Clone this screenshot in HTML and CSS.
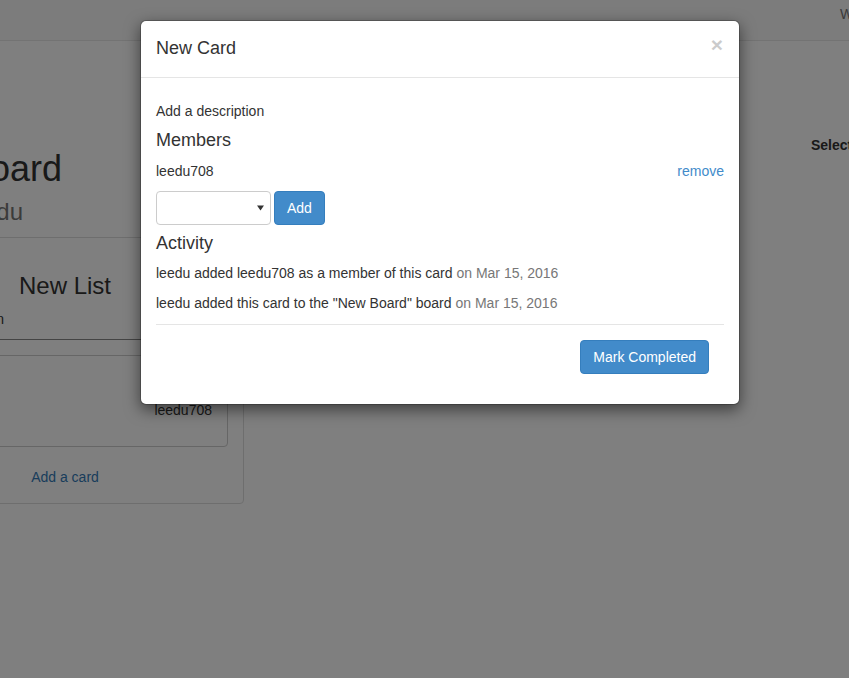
FILE: index.html
```html
<!DOCTYPE html>
<html>
<head>
<meta charset="utf-8">
<title>New Card</title>
<link rel="stylesheet" href="styles.css">
</head>
<body>
<div class="viewport">
  <nav class="navbar">
    <span class="nav-text">Welcome, leedu</span>
  </nav>
  <div class="main">
    <section class="board-col">
      <div class="board-head">
        <h1 class="board-title">New Board</h1>
      </div>
      <div class="board-sub-wrap">
        <div class="board-sub">by leedu</div>
      </div>
      <div class="list-panel">
        <h3 class="list-title">New List</h3>
        <div class="list-input">Card description</div>
        <div class="card">
          <div class="card-title">New Card</div>
          <div class="card-member">leedu708</div>
        </div>
        <a class="add-card">Add a card</a>
      </div>
    </section>
    <aside class="side-col">
      <label class="side-label">Select a board</label>
    </aside>
  </div>

  <div class="backdrop"></div>

  <div class="modal">
    <div class="modal-header">
      <h4 class="modal-title">New Card</h4>
      <span class="close">&times;</span>
    </div>
    <div class="modal-body">
      <p class="desc">Add a description</p>
      <h4 class="section-title">Members</h4>
      <div class="member-row">
        <span>leedu708</span>
        <a class="link">remove</a>
      </div>
      <div class="add-row">
        <div class="select">
          <svg class="caret" width="7" height="6" viewBox="0 0 7 6"><path d="M0 0.5 H7 L3.5 5.5 Z" fill="#333"/></svg>
        </div>
        <button class="btn">Add</button>
      </div>
      <h4 class="section-title activity-title">Activity</h4>
      <p class="activity">leedu added leedu708 as a member of this card <span class="muted">on Mar 15, 2016</span></p>
      <p class="activity last">leedu added this card to the "New Board" board <span class="muted">on Mar 15, 2016</span></p>
      <div class="modal-footer">
        <button class="btn">Mark Completed</button>
      </div>
    </div>
  </div>
</div>
</body>
</html>
```

FILE: styles.css
```css
html, body {
  margin: 0;
  padding: 0;
  overflow: hidden;
}
body {
  font-family: "Liberation Sans", Arial, sans-serif;
  font-size: 14px;
  line-height: 20px;
  color: #333;
  background: #fff;
}
.viewport {
  position: relative;
  width: 849px;
  height: 678px;
  overflow: hidden;
}
.navbar {
  height: 40px;
  background: #f8f8f8;
  border-bottom: 1px solid #e7e7e7;
  display: flex;
  padding-left: 840px;
  box-sizing: content-box;
  white-space: nowrap;
}
.nav-text {
  color: #777;
  line-height: 20px;
  padding-top: 4px;
}
.main {
  display: flex;
  align-items: flex-start;
  gap: 567px;
  margin-left: -114px;
}
.board-col {
  width: 358px;
  flex: none;
}
.board-head {
  display: flex;
  justify-content: flex-end;
  padding-right: 182px;
  margin-top: 108px;
}
.board-title {
  margin: 0;
  font-size: 36px;
  line-height: 39.6px;
  font-weight: 500;
  white-space: nowrap;
  flex: none;
}
.board-sub-wrap {
  display: flex;
  justify-content: flex-end;
  padding-right: 221px;
  margin-top: 10px;
}
.board-sub {
  flex: none;
  font-size: 24px;
  line-height: 26.4px;
  color: #777;
  white-space: nowrap;
}
.list-panel {
  margin-top: 12px;
  border: 1px solid #ddd;
  border-radius: 4px;
  padding: 15px 15px 16px;
}
.list-title {
  margin: 20px 0 0;
  font-size: 24px;
  line-height: 26.4px;
  font-weight: 500;
  text-align: center;
}
.list-input {
  padding: 10px 0;
  border-bottom: 1px solid #888;
  white-space: nowrap;
}
.card {
  margin-top: 15px;
  border: 1px solid #ccc;
  border-radius: 4px;
  padding: 10px 15px 26px;
}
.card-title {
  margin-bottom: 14px;
}
.card-member {
  text-align: right;
}
.add-card {
  display: block;
  margin-top: 20px;
  text-align: center;
  color: #337ab7;
}
.side-col {
  flex: none;
  padding-top: 94px;
  white-space: nowrap;
}
.side-label {
  font-weight: 700;
}
.backdrop {
  position: absolute;
  inset: 0;
  background: rgba(0, 0, 0, 0.5);
}
.modal {
  position: absolute;
  left: 140px;
  top: 20px;
  width: 600px;
  box-sizing: border-box;
  background: #fff;
  border: 1px solid rgba(0, 0, 0, 0.2);
  border-radius: 6px;
  box-shadow: 0 5px 15px rgba(0, 0, 0, 0.5);
  background-clip: padding-box;
}
.modal-header {
  padding: 15px;
  border-bottom: 1px solid #e5e5e5;
  display: flex;
  justify-content: space-between;
  align-items: flex-start;
}
.modal-title {
  margin: 0;
  font-size: 18px;
  line-height: 25.7px;
  font-weight: 500;
}
.close {
  font-size: 21px;
  font-weight: 700;
  line-height: 1;
  color: #000;
  opacity: 0.2;
  margin-top: -2px;
  margin-right: 1px;
}
.modal-body {
  padding: 15px;
}
.desc {
  margin: 8px 0 0;
}
.section-title {
  margin: 10px 0 10px;
  font-size: 18px;
  line-height: 19.8px;
  font-weight: 500;
}
.activity-title {
  margin-top: 9px;
}
.member-row {
  display: flex;
  justify-content: space-between;
}
.link {
  color: #428bca;
}
.add-row {
  display: flex;
  gap: 3px;
  margin-top: 10px;
}
.select {
  width: 115px;
  height: 34px;
  box-sizing: border-box;
  border: 1px solid #ccc;
  border-radius: 4px;
  background: #fff;
  display: flex;
  justify-content: flex-end;
  align-items: center;
  padding-right: 6px;
}
.caret {
  display: block;
}
.btn {
  font-family: "Liberation Sans", Arial, sans-serif;
  font-size: 14px;
  line-height: 20px;
  padding: 6px 12px;
  height: 34px;
  color: #fff;
  background: #428bca;
  border: 1px solid #357ebd;
  border-radius: 4px;
  margin: 0;
}
.activity {
  margin: 0 0 10px;
}
.activity.last {
  margin-bottom: 11px;
}
.muted {
  color: #777;
}
.modal-footer {
  border-top: 1px solid #e5e5e5;
  padding: 15px;
  display: flex;
  justify-content: flex-end;
}
```
